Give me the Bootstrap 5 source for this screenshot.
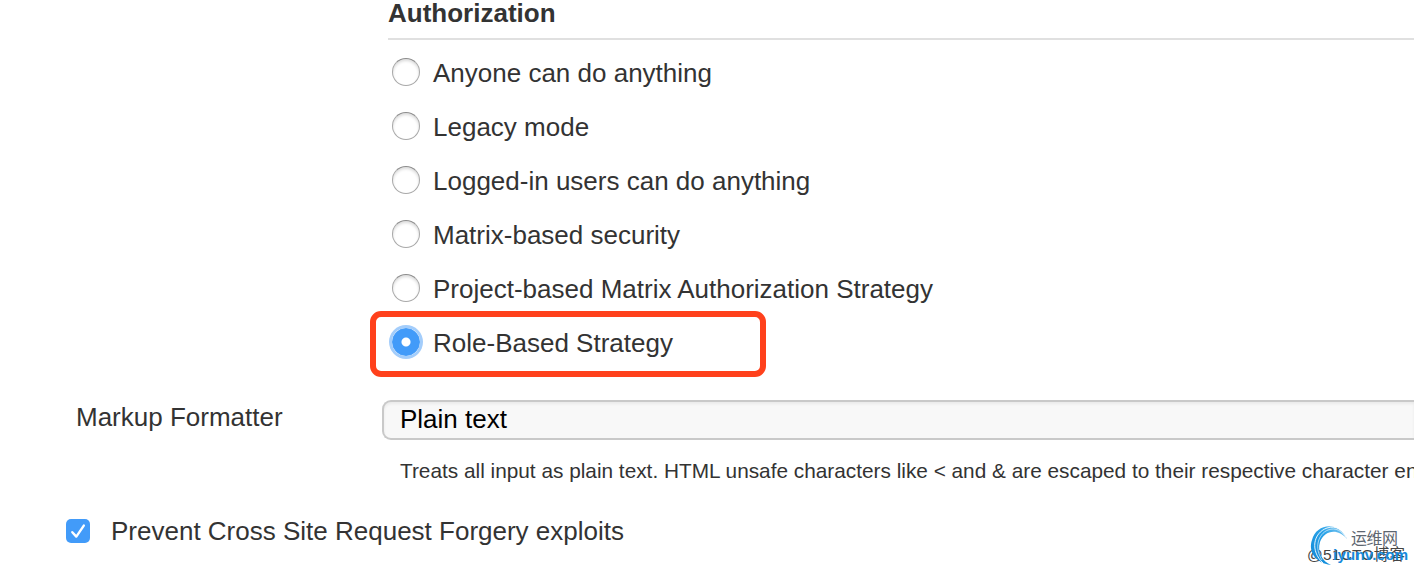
<!DOCTYPE html>
<html lang="en">
<head>
  <meta charset="UTF-8" />
  <title>Configure Global Security</title>
  <meta name="viewport" content="width=device-width, initial-scale=1" />
  <link href="https://cdn.jsdelivr.net/npm/bootstrap@5.3.0/dist/css/bootstrap.min.css" rel="stylesheet" />
  <style>
    body {
      background-color: #fff;
      color: #333;
      font-family: "Liberation Sans", Arial, sans-serif;
      font-size: 26px;
      line-height: 30px;
    }
    .page {
      height: 572px;
    }
    .auth-block {
      margin-left: 388px;
    }
    .auth-title {
      font-size: 26px;
      line-height: 26px;
      height: 40px;
      border-bottom: 2px solid #e0e0e0;
      margin-bottom: 5px;
    }
    .auth-option {
      height: 54px;
      padding-left: 4px;
      gap: 13px;
    }
    .auth-option .form-check-input {
      width: 28px;
      height: 28px;
      border: 1px solid #a9a9a9;
      border-top-color: #8c8c8c;
      box-shadow: inset 0 2px 3px rgba(0, 0, 0, 0.14);
    }
    .auth-option .form-check-input:checked {
      background: radial-gradient(circle, #fff 4px, #429bf9 5px);
      border-color: #429bf9;
      box-shadow: 0 0 0 3px #a3cdfb;
    }
    .auth-option label {
      padding-top: 1px;
    }
    .highlight {
      left: -18px;
      top: -4px;
      width: 396px;
      height: 66px;
      border: 6px solid #ff411c;
      border-radius: 11px;
      pointer-events: none;
    }
    .formatter-row {
      margin-top: 31px;
      height: 40px;
    }
    .formatter-label {
      width: 382px;
      padding-left: 76px;
      padding-top: 2px;
    }
    .formatter-select {
      height: 40px;
      padding: 0 0 0 16px;
      border: 2px solid #c9c9c9;
      border-right: 0;
      border-radius: 9px 0 0 9px;
      background: #f8f8f8;
      color: #000;
      font-size: 26px;
      line-height: 34px;
      box-shadow: inset 0 2px 3px rgba(0, 0, 0, 0.06);
    }
    .hint {
      margin: 19px 0 0 400px;
      font-size: 20.8px;
      line-height: 24px;
    }
    .csrf-row {
      margin: 32px 0 0 66px;
      height: 32px;
      gap: 21px;
    }
    .csrf-row .form-check-input {
      width: 24px;
      height: 24px;
      border: 0;
      border-radius: 5px;
      background: #429bf9;
    }
    .csrf-row svg {
      left: 0;
      top: 4px;
      pointer-events: none;
    }
    .watermark {
      right: 0;
      bottom: 0;
    }
  </style>
</head>
<body>
  <div class="page position-relative overflow-hidden">
    <div class="auth-block">
      <div class="auth-title fw-bold">Authorization</div>
      <div class="auth-option d-flex align-items-center">
        <input class="form-check-input m-0" type="radio" name="auth" id="auth1" />
        <label for="auth1">Anyone can do anything</label>
      </div>
      <div class="auth-option d-flex align-items-center">
        <input class="form-check-input m-0" type="radio" name="auth" id="auth2" />
        <label for="auth2">Legacy mode</label>
      </div>
      <div class="auth-option d-flex align-items-center">
        <input class="form-check-input m-0" type="radio" name="auth" id="auth3" />
        <label for="auth3">Logged-in users can do anything</label>
      </div>
      <div class="auth-option d-flex align-items-center">
        <input class="form-check-input m-0" type="radio" name="auth" id="auth4" />
        <label for="auth4">Matrix-based security</label>
      </div>
      <div class="auth-option d-flex align-items-center">
        <input class="form-check-input m-0" type="radio" name="auth" id="auth5" />
        <label for="auth5">Project-based Matrix Authorization Strategy</label>
      </div>
      <div class="auth-option d-flex align-items-center position-relative">
        <input class="form-check-input m-0" type="radio" name="auth" id="auth6" checked />
        <label for="auth6">Role-Based Strategy</label>
        <div class="highlight position-absolute"></div>
      </div>
    </div>

    <div class="formatter-row d-flex">
      <div class="formatter-label flex-shrink-0">Markup Formatter</div>
      <div class="formatter-select flex-grow-1">Plain text</div>
    </div>
    <div class="hint text-nowrap">Treats all input as plain text. HTML unsafe characters like &lt; and &amp; are escaped to their respective character entities.</div>

    <div class="csrf-row d-flex align-items-center position-relative">
      <input class="form-check-input m-0" type="checkbox" id="csrf" checked />
      <svg class="position-absolute" width="24" height="24" viewBox="0 0 24 24" fill="none">
        <path d="M6.3 13.2 10.3 17.6 17.8 6.6" stroke="#fff" stroke-width="2.4" stroke-linecap="round" stroke-linejoin="round" />
      </svg>
      <label for="csrf">Prevent Cross Site Request Forgery exploits</label>
    </div>

    <svg class="watermark position-absolute" width="120" height="62" viewBox="0 0 120 62">
      <defs>
        <linearGradient id="swirl" x1="0" y1="1" x2="1" y2="0">
          <stop offset="0" stop-color="#0b86d6" />
          <stop offset="0.6" stop-color="#2ba3e8" />
          <stop offset="1" stop-color="#8ccdf2" />
        </linearGradient>
      </defs>
      <text x="13" y="50" font-family="Liberation Sans, Noto Sans CJK SC, sans-serif" font-size="15.5" fill="#444" textLength="98">@51CTO博客</text>
      <path d="M37 55C21 53 14 41 18 30C22 14 44 10 53 29C43 17 30 21 26 32C23 42 28 51 37 55Z" fill="url(#swirl)" />
      <path d="M29 53C16 41 19 23 33 18C42 15 49 20 52 27" fill="none" stroke="#fff" stroke-width="0.9" />
      <path d="M28 50C20 38 24 24 34 20C42 17 48 21 52 28" fill="none" stroke="#fff" stroke-width="0.6" />
      <text x="57" y="34" font-family="Noto Sans CJK SC, sans-serif" font-size="16" fill="#5d6670" textLength="47">运维网</text>
      <text x="39" y="50" font-family="Liberation Sans, sans-serif" font-size="15" font-weight="bold" fill="#168bdc" textLength="75">iyunv.com</text>
    </svg>
  </div>

  <script src="https://cdn.jsdelivr.net/npm/bootstrap@5.3.0/dist/js/bootstrap.bundle.min.js"></script>
</body>
</html>
